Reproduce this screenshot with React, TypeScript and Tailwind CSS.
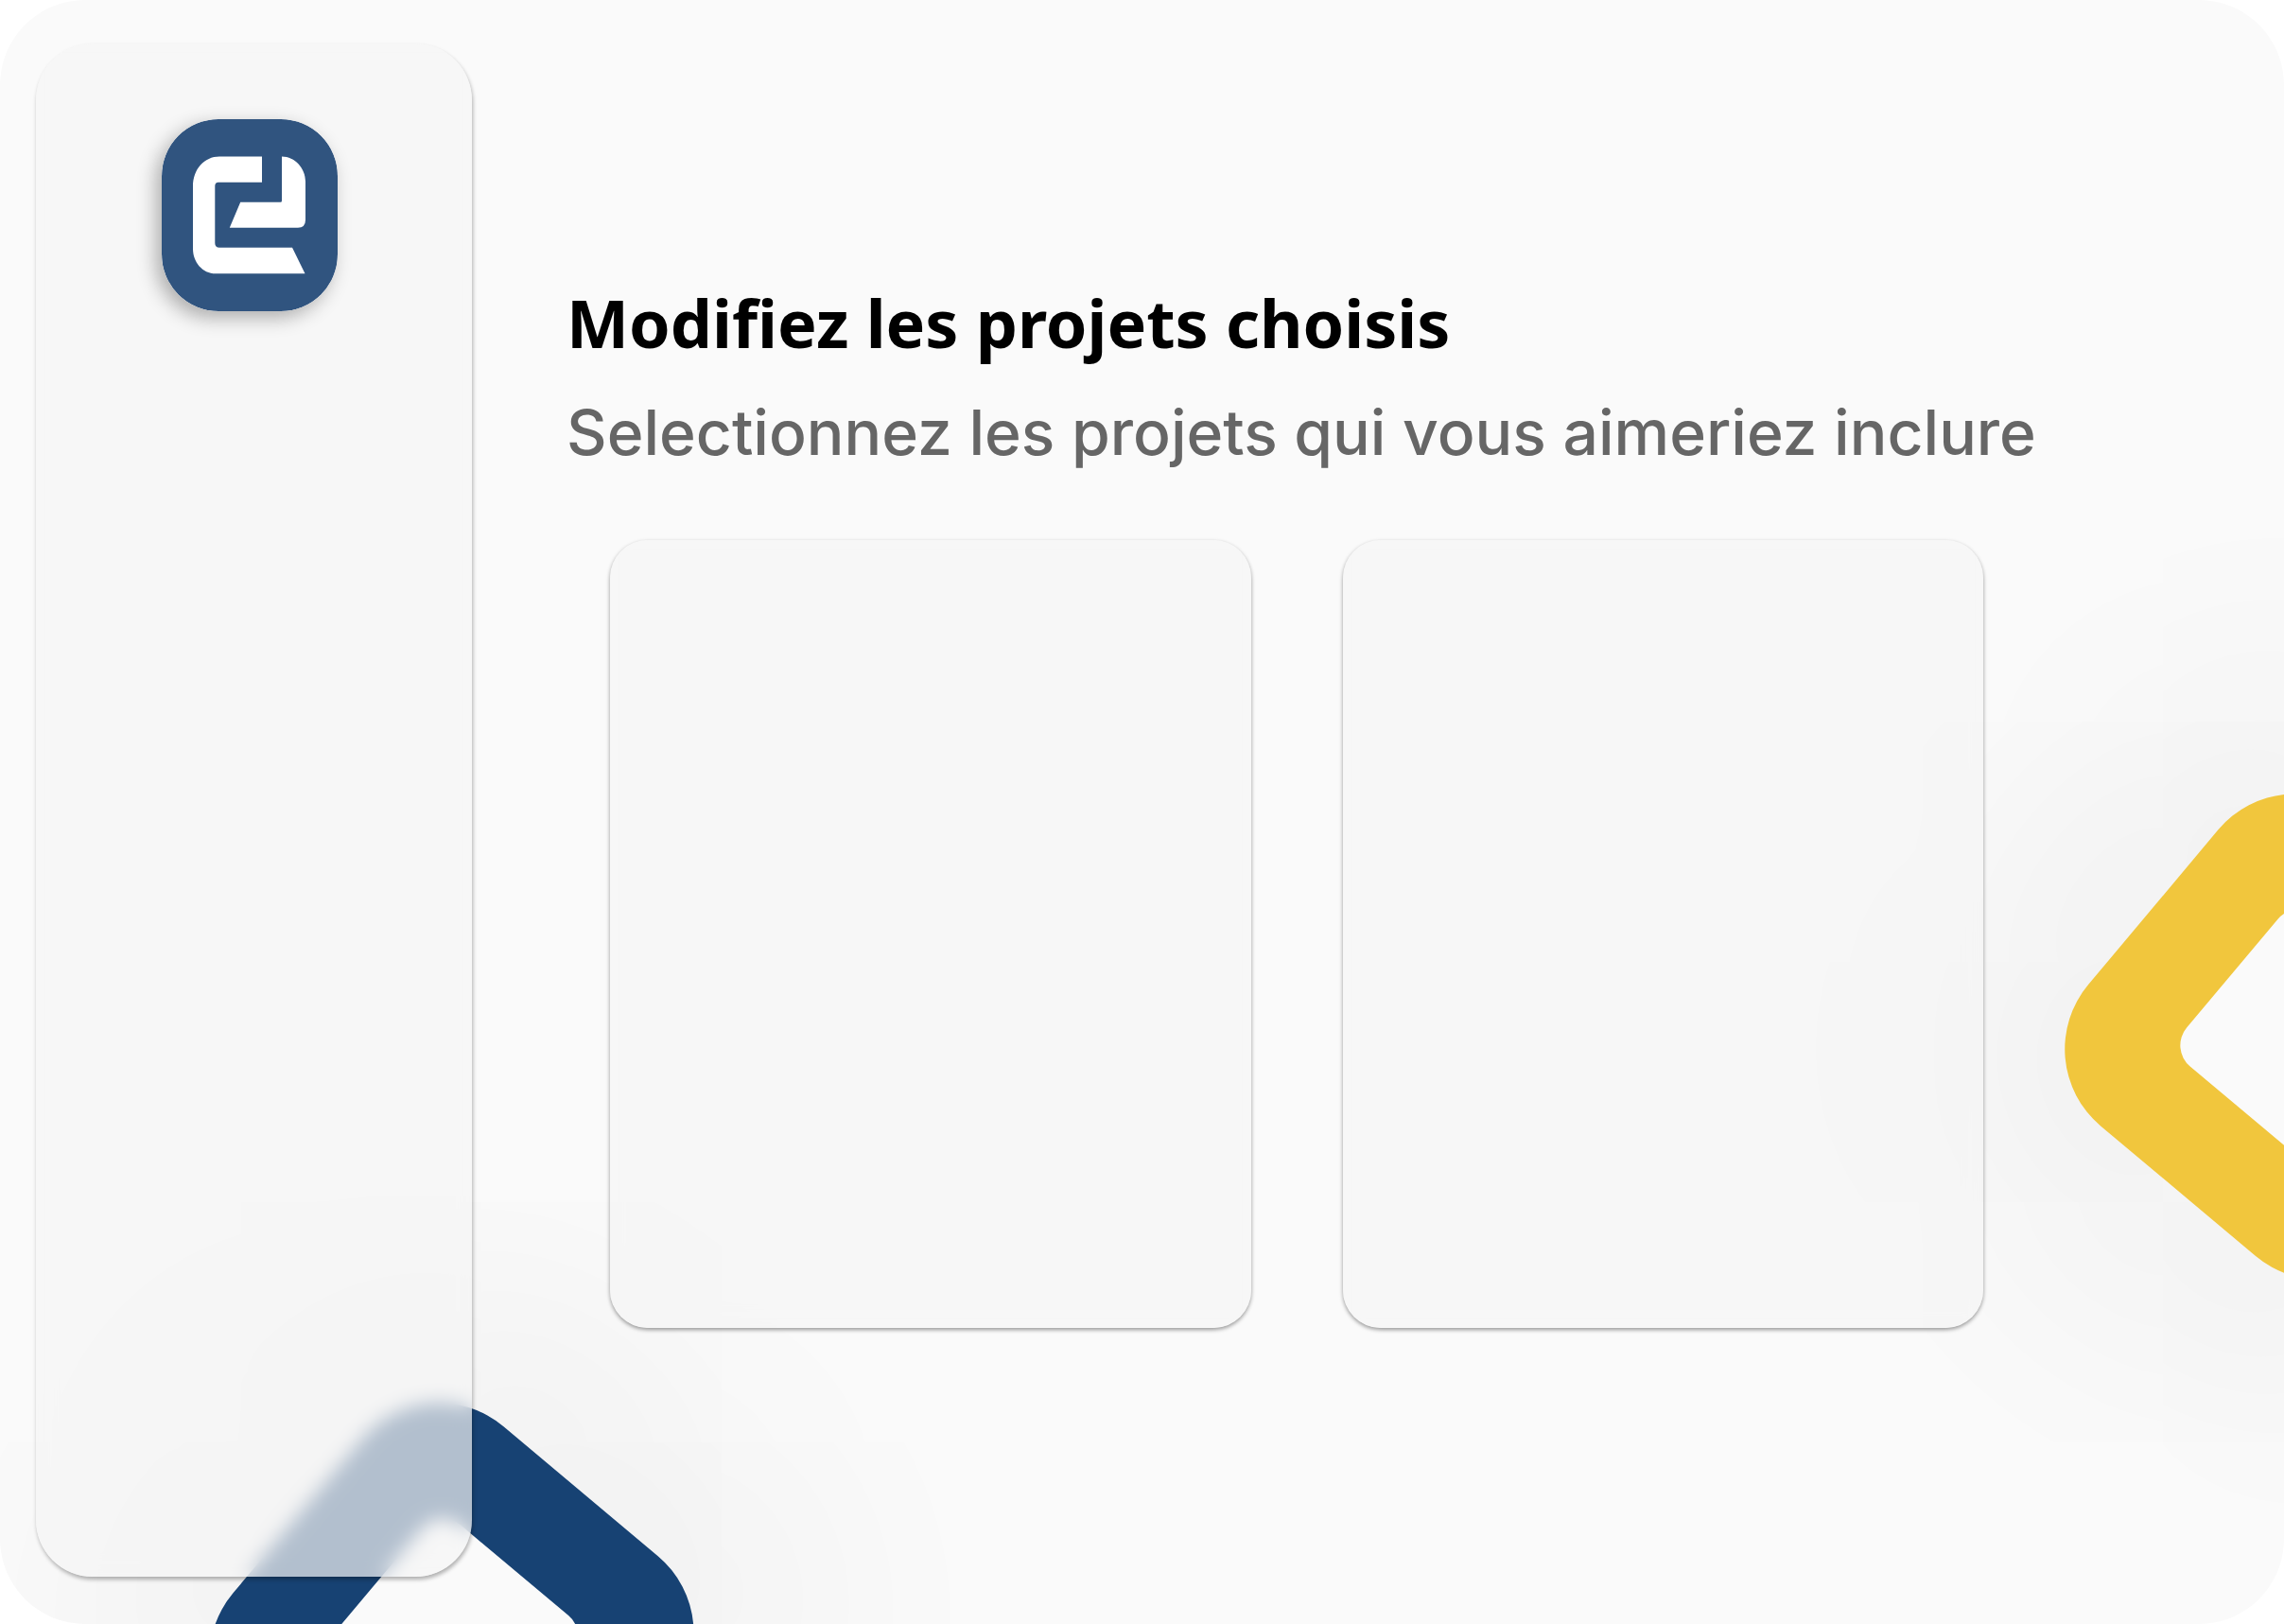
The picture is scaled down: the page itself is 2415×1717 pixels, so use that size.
import React from "react";

const projects = ["Projet 1", "Projet 2"];

function Logo() {
  return (
    <svg
      viewBox="0 0 186 203"
      role="img"
      aria-label="Logo"
      className="h-[203px] w-[186px] rounded-[60px] shadow-[-6px_7px_20px_rgba(0,0,0,0.3)]"
    >
      <rect width="186" height="203" rx="60" fill="#30547f" />
      <path
        fill="#fff"
        d="M61 39.5H106V66.7H60Q56.300 66.700 56.300 70.500V131Q56.300 135.700 61 135.700H138L151.500 163.300H57C43 163.300 33 151 33 137V71C33 53 45 39.500 61 39.500Z"
      />
      <path
        fill="#fff"
        d="M127 39.500C141 39.500 152 52 152 66V106.500Q152 114.700 144 114.700H71.800L83.200 87.700H125.500Q127 87.700 127 86.200Z"
      />
    </svg>
  );
}

export default function App() {
  return (
    <div className="min-h-screen bg-white font-['Noto_Sans',sans-serif]">
      <div className="relative isolate flex min-h-screen overflow-hidden rounded-[90px] bg-[#fafafa] pt-[46px] pr-[318px] pb-[50px] pl-[38px]">
        <div
          aria-hidden="true"
          className="absolute top-[883px] -right-[238px] -z-10 size-[426px] rotate-40 rounded-[106px] bg-[#f1c63d] p-[109px] shadow-[0_0_600px_140px_rgba(0,0,0,0.04)]"
        >
          <div className="size-full rounded-[29px] bg-[#fafafa]" />
        </div>
        <div
          aria-hidden="true"
          className="absolute -bottom-[235px] left-[265px] -z-10 size-[425px] rotate-40 rounded-[106px] bg-[#174273] p-[109px] shadow-[0_0_600px_140px_rgba(0,0,0,0.04)]"
        >
          <div className="size-full rounded-[29px] bg-[#fafafa]" />
        </div>

        <aside className="flex w-[461px] shrink-0 flex-col items-center rounded-[60px] bg-[#f5f5f5]/70 pt-[80px] pr-[10px] shadow-[1px_3px_4px_rgba(0,0,0,0.3)] backdrop-blur-[10px]">
          <Logo />
        </aside>

        <main className="min-w-0 flex-1 pt-[247px] pl-[100px]">
          <h1 className="text-[70px] leading-[96px] font-bold whitespace-nowrap text-black">
            Modifiez les projets choisis
          </h1>
          <p className="mt-[20px] font-['Inter',sans-serif] text-[66px] leading-[96px] font-medium whitespace-nowrap text-[#666666]">
            Selectionnez les projets qui vous aimeriez inclure
          </p>
          <div className="mt-[66px] ml-[46px] grid grid-cols-2 gap-[97px]">
            {projects.map((name) => (
              <button
                key={name}
                type="button"
                aria-label={name}
                className="h-[833px] rounded-[40px] bg-[#f5f5f5]/70 shadow-[0_2px_4px_rgba(0,0,0,0.4)] backdrop-blur-[10px]"
              />
            ))}
          </div>
        </main>
      </div>
    </div>
  );
}
